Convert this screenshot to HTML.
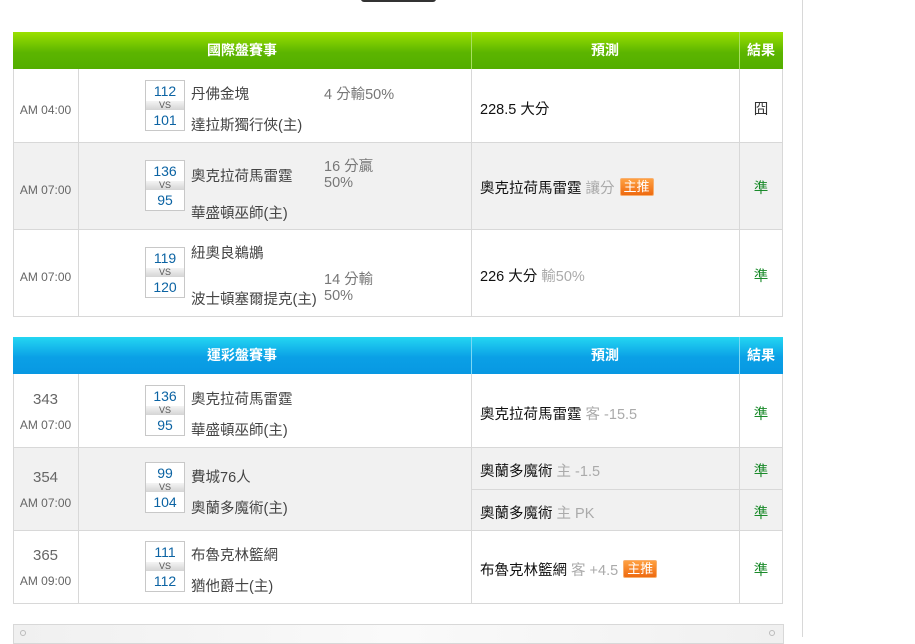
<!DOCTYPE html><html><head><meta charset="utf-8"><style>
*{margin:0;padding:0;box-sizing:border-box}
body{width:915px;height:637px;background:#fff;position:relative;overflow:hidden;font-family:"Liberation Sans","Noto Sans CJK TC",sans-serif;font-size:14.5px;color:#333}
.a{position:absolute;white-space:nowrap}
.hd{position:absolute;left:13px;width:770px;height:37px;color:#fff;font-weight:bold;font-size:14px}
.hd div{position:absolute;top:0;height:37px;line-height:37px;text-align:center}
.g{background:linear-gradient(#9be000,#5cb500 55%,#53ae00)}
.b{background:linear-gradient(#24d6f2,#0aa0e6 55%,#0898e2)}
.hl{position:absolute;top:0;width:1px;height:37px}
.row{position:absolute;left:13px;width:770px}
.vl{position:absolute;width:1px;background:#d8d8d8}
.hz{position:absolute;left:13px;width:770px;height:1px;background:#d8d8d8}
.t{font-size:12px;color:#666;text-align:center;width:65px;left:13px}
.n{font-size:15px;color:#666;text-align:center;width:65px;left:13px}
.sc{position:absolute;left:145px;width:40px;height:51px;border:1px solid #c8c8c8;background:#fff}
.sc .s{height:20px;line-height:20px;text-align:center;color:#0b63a3;font-size:14px}
.sc .v{height:9px;line-height:9px;font-size:9px;text-align:center;color:#555;background:linear-gradient(#f4f4f4,#d4d4d4)}
.nm{left:191px;color:#444}
.h{left:324px;color:#777}
.p{left:480px;color:#111}
.gr{color:#aaa}
.r{left:739px;width:44px;text-align:center;color:#1a8a2a}
.tag{display:inline-block;background:linear-gradient(#ffa040,#ee6a10);color:#fff;font-size:13px;line-height:16px;padding:0 3px;border-radius:2px;border:1px solid #f8b070;vertical-align:2px;margin-left:5px}
</style></head><body>
<div class="a" style="left:361px;top:-4px;width:75px;height:6px;background:#333;border-radius:3px"></div>
<div class="a" style="left:802px;top:0;width:1px;height:637px;background:#d8d8d8"></div>

<div class="hd g" style="top:32px"><div style="left:0;width:458px">國際盤賽事</div><div style="left:458px;width:268px">預測</div><div style="left:726px;width:44px">結果</div>
<div class="hl" style="left:458px;background:#a8e060"></div><div class="hl" style="left:726px;background:#a8e060"></div></div>
<div class="row" style="top:69px;height:73px;background:#fff"></div>
<div class="row" style="top:142px;height:87px;background:#f1f1f1"></div>
<div class="row" style="top:229px;height:87px;background:#fff"></div>
<div class="hz" style="top:142px"></div><div class="hz" style="top:229px"></div><div class="hz" style="top:316px"></div>
<div class="vl" style="left:13px;top:69px;height:248px"></div>
<div class="vl" style="left:78px;top:69px;height:247px"></div>
<div class="vl" style="left:471px;top:69px;height:247px"></div>
<div class="vl" style="left:739px;top:69px;height:247px"></div>
<div class="vl" style="left:782px;top:69px;height:248px"></div>

<div class="a t" style="top:103px">AM 04:00</div>
<div class="sc" style="top:80px"><div class="s">112</div><div class="v">VS</div><div class="s">101</div></div>
<div class="a nm" style="top:83px">丹佛金塊</div><div class="a nm" style="top:114px">達拉斯獨行俠(主)</div>
<div class="a h" style="top:83px">4 分輸50%</div>
<div class="a p" style="top:98px">228.5 大分</div><div class="a r" style="top:98px;color:#333">囧</div>

<div class="a t" style="top:183px">AM 07:00</div>
<div class="sc" style="top:160px"><div class="s">136</div><div class="v">VS</div><div class="s">95</div></div>
<div class="a nm" style="top:165px">奧克拉荷馬雷霆</div><div class="a nm" style="top:202px">華盛頓巫師(主)</div>
<div class="a h" style="top:155px">16 分贏</div><div class="a h" style="top:175px">50%</div>
<div class="a p" style="top:177px">奧克拉荷馬雷霆 <span class="gr">讓分</span><span class="tag">主推</span></div><div class="a r" style="top:177px">準</div>

<div class="a t" style="top:270px">AM 07:00</div>
<div class="sc" style="top:247px"><div class="s">119</div><div class="v">VS</div><div class="s">120</div></div>
<div class="a nm" style="top:242px">紐奧良鵜鶘</div><div class="a nm" style="top:288px">波士頓塞爾提克(主)</div>
<div class="a h" style="top:268px">14 分輸</div><div class="a h" style="top:288px">50%</div>
<div class="a p" style="top:265px">226 大分 <span class="gr">輸50%</span></div><div class="a r" style="top:265px">準</div>

<div class="hd b" style="top:337px"><div style="left:0;width:458px">運彩盤賽事</div><div style="left:458px;width:268px">預測</div><div style="left:726px;width:44px">結果</div>
<div class="hl" style="left:458px;background:#7ad8f4"></div><div class="hl" style="left:726px;background:#7ad8f4"></div></div>
<div class="row" style="top:374px;height:73px;background:#fff"></div>
<div class="row" style="top:447px;height:83px;background:#f1f1f1"></div>
<div class="row" style="top:530px;height:73px;background:#fff"></div>
<div class="hz" style="top:447px"></div><div class="hz" style="top:530px"></div><div class="hz" style="top:603px"></div>
<div class="a" style="left:471px;top:489px;width:312px;height:1px;background:#d8d8d8"></div>
<div class="vl" style="left:13px;top:374px;height:230px"></div>
<div class="vl" style="left:78px;top:374px;height:229px"></div>
<div class="vl" style="left:471px;top:374px;height:229px"></div>
<div class="vl" style="left:739px;top:374px;height:229px"></div>
<div class="vl" style="left:782px;top:374px;height:230px"></div>

<div class="a n" style="top:391px">343</div><div class="a t" style="top:418px">AM 07:00</div>
<div class="sc" style="top:385px"><div class="s">136</div><div class="v">VS</div><div class="s">95</div></div>
<div class="a nm" style="top:388px">奧克拉荷馬雷霆</div><div class="a nm" style="top:419px">華盛頓巫師(主)</div>
<div class="a p" style="top:403px">奧克拉荷馬雷霆 <span class="gr">客 -15.5</span></div><div class="a r" style="top:403px">準</div>

<div class="a n" style="top:469px">354</div><div class="a t" style="top:496px">AM 07:00</div>
<div class="sc" style="top:462px"><div class="s">99</div><div class="v">VS</div><div class="s">104</div></div>
<div class="a nm" style="top:466px">費城76人</div><div class="a nm" style="top:497px">奧蘭多魔術(主)</div>
<div class="a p" style="top:460px">奧蘭多魔術 <span class="gr">主 -1.5</span></div><div class="a r" style="top:460px">準</div>
<div class="a p" style="top:502px">奧蘭多魔術 <span class="gr">主 PK</span></div><div class="a r" style="top:502px">準</div>

<div class="a n" style="top:547px">365</div><div class="a t" style="top:574px">AM 09:00</div>
<div class="sc" style="top:541px"><div class="s">111</div><div class="v">VS</div><div class="s">112</div></div>
<div class="a nm" style="top:544px">布魯克林籃網</div><div class="a nm" style="top:575px">猶他爵士(主)</div>
<div class="a p" style="top:559px">布魯克林籃網 <span class="gr">客 +4.5</span><span class="tag">主推</span></div><div class="a r" style="top:559px">準</div>

<div class="a" style="left:13px;top:624px;width:771px;height:20px;border:1px solid #d8d8d8;background:linear-gradient(90deg,#f0f0f0,#fafafa 50%,#f0f0f0)"></div>
<div class="a" style="left:20px;top:630px;width:6px;height:6px;border:1px solid #bbb;border-radius:50%"></div>
<div class="a" style="left:769px;top:630px;width:6px;height:6px;border:1px solid #bbb;border-radius:50%"></div>
</body></html>
